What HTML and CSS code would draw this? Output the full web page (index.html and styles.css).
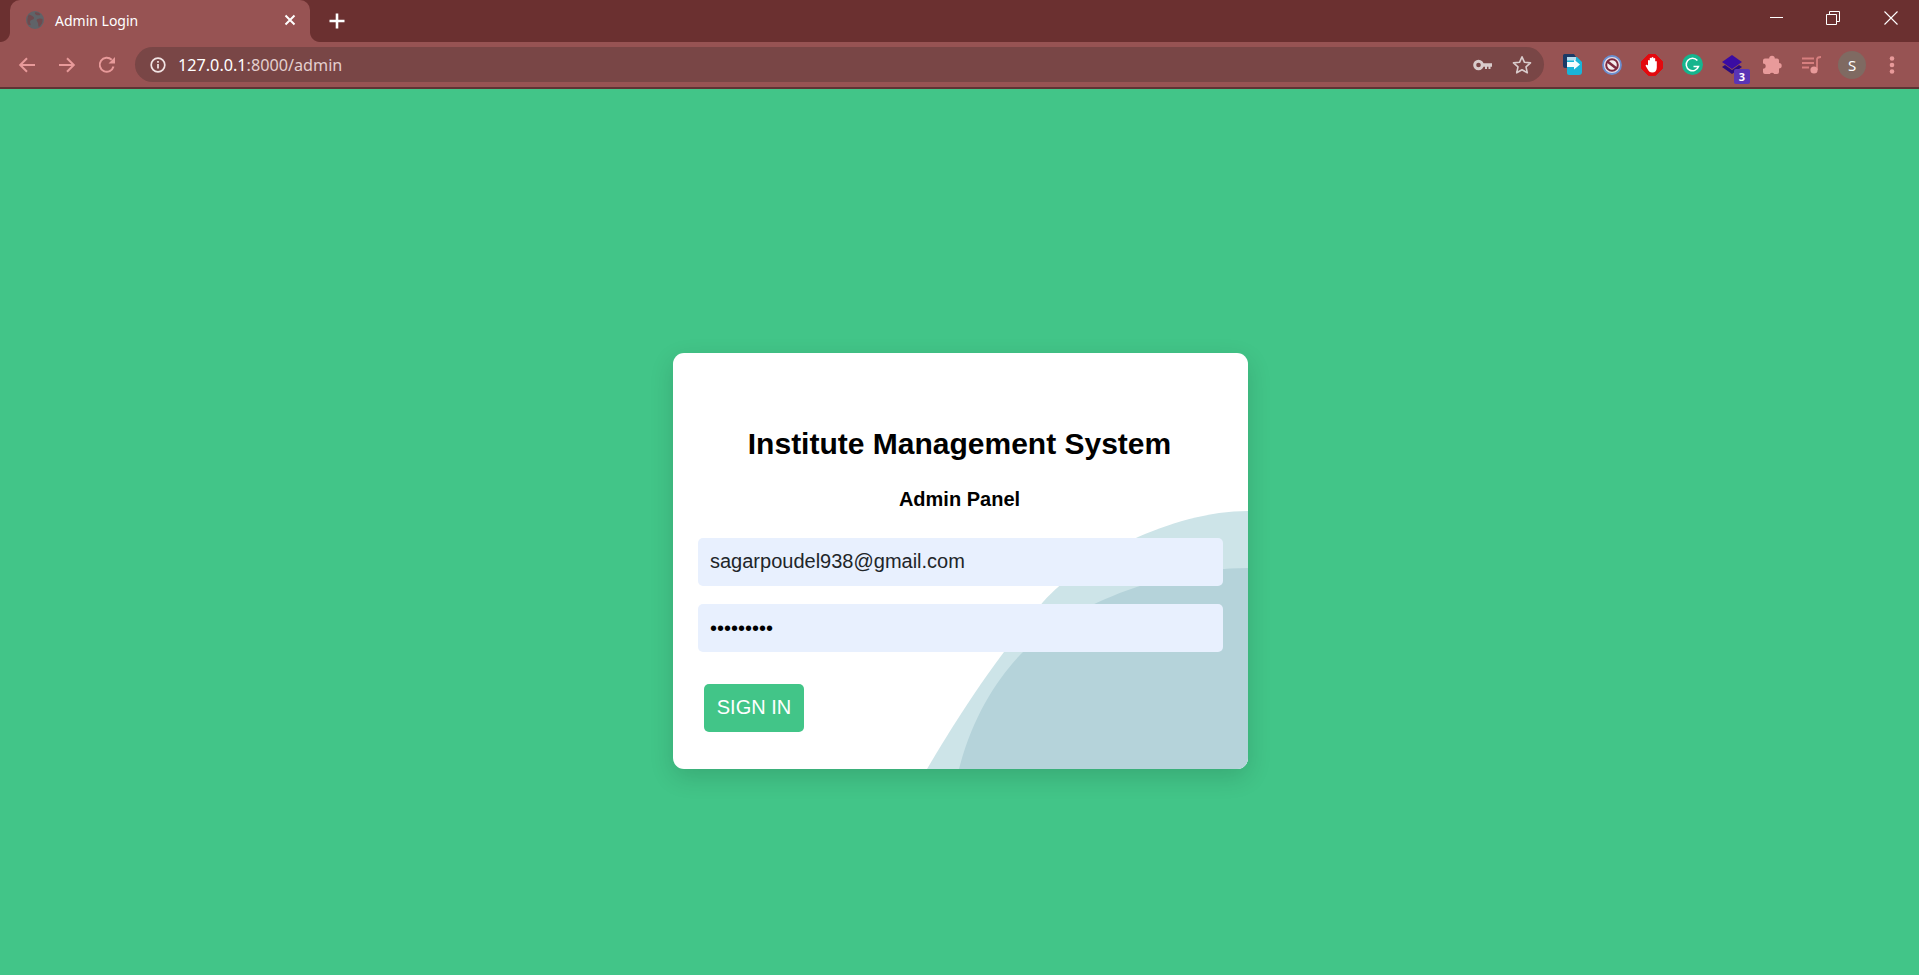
FILE: index.html
```html
<!DOCTYPE html>
<html lang="en">
<head>
<meta charset="utf-8">
<title>Admin Login</title>
<link rel="stylesheet" href="styles.css">
</head>
<body>
<div class="browser">
  <div class="tabstrip">
    <div class="tab">
      <svg class="favicon" width="18" height="18" viewBox="0 0 18 18"><circle cx="9" cy="9" r="9" fill="#5f6368"/><path d="M3 3.500c2 .5 3 1 4.500 2.500s-.5 2.500-2 3-2 2-1 4-2.500 1.500-3-1S1.500 5 3 3.500zM11 8.500c1.500-1 4-1.500 5.500-.5.5 3-1 6-3.500 8-1-.5-.5-2.500-1-4s-2-2.500-1-3.500zM9 1.500c2-.5 4 .5 5.500 2-1 1-3 1-4 .5S8.500 2.500 9 1.500z" fill="#6f4a4e"/></svg>
      <span class="tab-title">Admin Login</span>
      <svg class="tab-close" width="12" height="12" viewBox="0 0 12 12"><path d="M1.500 1.500l9 9M10.500 1.500l-9 9" stroke="#fff" stroke-width="2"/></svg>
    </div>
    <svg class="newtab" width="16" height="16" viewBox="0 0 16 16"><path d="M8 .5v15M.5 8h15" stroke="#fff" stroke-width="2.600"/></svg>
    <div class="winctl">
      <span class="winbtn"><svg width="14" height="14" viewBox="0 0 14 14"><path d="M0 6.500h13" stroke="#fff"/></svg></span>
      <span class="winbtn"><svg width="14" height="14" viewBox="0 0 14 14"><path d="M.5 3.500h10v10H.5zM3.500 3.500v-3h10v10h-3" fill="none" stroke="#fff"/></svg></span>
      <span class="winbtn"><svg width="14" height="14" viewBox="0 0 14 14"><path d="M.5.500l13 13M13.500.500l-13 13" stroke="#fff" stroke-width="1.100"/></svg></span>
    </div>
  </div>
  <div class="toolbar">
    <span class="iconbtn"><svg width="18" height="18" viewBox="0 0 18 18"><path d="M17 9H2M9 2.200L2.200 9 9 15.800" fill="none" stroke="#e89a9a" stroke-width="2"/></svg></span>
    <span class="iconbtn"><svg width="18" height="18" viewBox="0 0 18 18"><path d="M1 9h15M9 2.200L15.800 9 9 15.800" fill="none" stroke="#e89a9a" stroke-width="2"/></svg></span>
    <span class="iconbtn"><svg width="18" height="18" viewBox="0 0 18 18"><path d="M15.500 10.500A7 7 0 1 1 13.700 3.800" fill="none" stroke="#e89a9a" stroke-width="2"/><path d="M17 1v6.500h-6.500z" fill="#e89a9a"/></svg></span>
    <div class="omnibox">
      <svg class="info" width="16" height="16" viewBox="0 0 16 16"><circle cx="8" cy="8" r="6.800" fill="none" stroke="#f2e4e4" stroke-width="1.700"/><path d="M8 7v4.500M8 4v1.700" stroke="#f2e4e4" stroke-width="1.700"/></svg>
      <span class="url"><span class="host">127.0.0.1</span>:8000/admin</span>
      <svg class="key" width="19" height="12" viewBox="0 0 19 12"><circle cx="5.500" cy="6" r="3.800" fill="none" stroke="#d9cccc" stroke-width="3"/><path d="M9 4.300h10v3.400h-1.500V10h-2V7.700h-1.500V10h-2V7.700H9z" fill="#d9cccc"/></svg>
      <svg class="star" width="20" height="20" viewBox="0 0 20 20"><path d="M10 1.800l2.500 5.500 6 .6-4.500 4 1.300 5.900L10 14.700l-5.300 3.100L6 11.900l-4.500-4 6-.6z" fill="none" stroke="#d9cccc" stroke-width="1.600" stroke-linejoin="round"/></svg>
    </div>
    <div class="extensions">
      <span class="iconbtn"><svg class="ext-first" width="20" height="21" viewBox="0 0 20 21"><path d="M0 1.500A1.500 1.500 0 0 1 1.500 0H11l2 3H4v11H2a2 2 0 0 1-2-2z" fill="#1b3a66"/><path d="M4 3h10l5 5v10a3 3 0 0 1-3 3H6a2 2 0 0 1-2-2z" fill="#19b4d8"/><path d="M4 3h9v3.500H4z" fill="#b9dff0"/><path d="M4 8h7V5.500l6 5-6 5V13H4z" fill="#f4fbfd"/></svg></span>
      <span class="iconbtn"><svg width="20" height="20" viewBox="0 0 20 20"><circle cx="10" cy="10" r="9" fill="#e6dde6" stroke="#6a8fd0" stroke-width="1.800"/><circle cx="10" cy="10" r="5.800" fill="#f4eeee" stroke="#7d2a3e" stroke-width="2"/><path d="M5.500 6.500l9 7" stroke="#7d2a3e" stroke-width="2.600"/></svg></span>
      <span class="iconbtn"><svg width="22" height="22" viewBox="0 0 22 22"><path d="M7.500.500h7L21.500 7.500v7L14.500 21.500h-7L.500 14.500v-7z" fill="#e3090e" stroke="#e3090e" stroke-linejoin="round"/><path d="M7 11.500V6.500a1 1 0 0 1 1.800 0V4.200a1 1 0 0 1 1.800 0V3.500a1 1 0 0 1 1.800 0V4.500a1 1 0 0 1 1.800 0V7.500a.9.900 0 0 1 1.600 0V13.500c0 3-1.500 5-4.600 5-2.400 0-3.400-1-4.400-3L4.700 12c-.6-1.200 1.500-2 2.300-.5z" fill="#fff"/></svg></span>
      <span class="iconbtn"><svg width="21" height="21" viewBox="0 0 21 21"><circle cx="10.500" cy="10.500" r="10.500" fill="#15b58e"/><path d="M15.400 6.500a6.300 6.300 0 1 0 1.100 6H11.500M16.500 12.500l-1.800 2.600" fill="none" stroke="#fff" stroke-width="1.500"/></svg></span>
      <span class="iconbtn badge-host"><svg width="22" height="20" viewBox="0 0 22 20"><path d="M11 0l10 7-10 7L1 7z" fill="#3a0ca3"/><path d="M4 10l7 5 7-5 3 2-10 7-10-7z" fill="#2a0a80"/></svg><span class="badge">3</span></span>
      <span class="iconbtn"><svg width="20" height="20" viewBox="0 0 20 20"><path d="M7.200 3.500a2.800 2.800 0 0 1 5.600 0H15a2 2 0 0 1 2 2v2.500a2.700 2.700 0 0 1 0 5.400V17a2 2 0 0 1-2 2h-2.800a2.500 2.500 0 0 0-4.400 0H3a2 2 0 0 1-2-2v-3.200a2.700 2.700 0 0 0 0-5.400V5.500a2 2 0 0 1 2-2z" fill="#e89a9a"/></svg></span>
      <span class="iconbtn"><svg width="20" height="18" viewBox="0 0 20 18"><path d="M0 2.500h12M0 7h12M0 11.500h7" stroke="#d77f7f" stroke-width="1.800"/><path d="M15 14V3.500C15 1.800 16.500 1 19 1" fill="none" stroke="#d77f7f" stroke-width="1.800"/><circle cx="12" cy="14" r="3.600" fill="#e89a9a"/></svg></span>
      <span class="iconbtn"><span class="avatar">S</span></span>
      <span class="iconbtn"><svg width="6" height="18" viewBox="0 0 6 18"><circle cx="3" cy="2.500" r="2.300" fill="#e89a9a"/><circle cx="3" cy="9" r="2.300" fill="#e89a9a"/><circle cx="3" cy="15.500" r="2.300" fill="#e89a9a"/></svg></span>
    </div>
  </div>
  <main class="page">
    <form class="card">
      <svg class="waves" width="575" height="416" viewBox="1 0 575 416"><path d="M255 416C300 340 330 300 371 249 410 205 500 158 576 158V416z" fill="#cde4e8"/><path d="M287 416C300 365 325 325 351 299 385 262 480 215 576 215V416z" fill="#b5d3da"/></svg>
      <h1 class="title">Institute Management System</h1>
      <h2 class="subtitle">Admin Panel</h2>
      <input class="field" type="email" value="sagarpoudel938@gmail.com">
      <input class="field" type="password" value="password1">
      <button class="signin" type="button">SIGN IN</button>
    </form>
  </main>
</div>
</body>
</html>
```
FILE: styles.css
```css
* { box-sizing: border-box; }
html, body { margin: 0; height: 100%; overflow: hidden; }
body { font-family: "Liberation Sans", Arial, sans-serif; }
.browser { height: 975px; display: flex; flex-direction: column; }

.tabstrip { height: 42px; flex: none; display: flex; align-items: center; background: #6b3030; padding-left: 10px; }
.tab { position: relative; width: 300px; height: 42px; display: flex; align-items: center; padding: 0 14px 2px 16px; background: #975353; border-radius: 10px 10px 0 0; }
.tab::before, .tab::after { content: ""; position: absolute; bottom: 0; width: 10px; height: 10px; }
.tab::before { left: -10px; background: radial-gradient(circle at 0 0, #6b3030 9.500px, #975353 10.500px); }
.tab::after { right: -10px; background: radial-gradient(circle at 100% 0, #6b3030 9.500px, #975353 10.500px); }
.favicon { flex: none; margin-right: 11px; }
.tab-title { flex: 1; color: #fff; font: 14px "Noto Sans", sans-serif; }
.tab-close { flex: none; }
.newtab { flex: none; margin-left: 19px; }
.winctl { margin-left: auto; display: flex; align-self: flex-start; }
.winbtn { width: 56px; height: 36px; display: flex; align-items: center; justify-content: center; }
.winbtn:last-child { margin-left: 2px; }

.toolbar { height: 47px; flex: none; display: flex; align-items: center; padding: 0 7px; background: #975353; border-bottom: 2px solid #5e3434; }
.iconbtn { width: 40px; height: 36px; flex: none; display: flex; align-items: center; justify-content: center; }
.ext-first { margin-left: 1px; }
.omnibox { flex: 1; height: 35px; margin: 0 8px; display: flex; align-items: center; padding: 0 12px 0 15px; background: #794646; border-radius: 18px; }
.info { flex: none; margin-right: 12px; }
.url { flex: 1; font: 16.2px "Noto Sans", sans-serif; color: #e4cfcf; }
.host { color: #fff; }
.key { flex: none; margin-right: 20px; }
.star { flex: none; }
.extensions { display: flex; }
.badge-host { position: relative; }
.badge { position: absolute; left: 22px; top: 22px; width: 16px; height: 15px; border-radius: 2px; background: #5a35b5; color: #fff; font: bold 11px/15px "Noto Sans", sans-serif; text-align: center; }
.avatar { width: 28px; height: 28px; border-radius: 50%; background: #7f6a62; color: #fff; font: 15px/28px "Noto Sans", sans-serif; text-align: center; }

.page { flex: 1; display: flex; align-items: center; justify-content: center; padding: 58px 0 0 2px; background: #42c588; }
.card { position: relative; width: 575px; height: 416px; padding: 0 25px; background: #fff; border-radius: 11px; overflow: hidden; display: flex; flex-direction: column; align-items: center; box-shadow: 0 8px 24px rgba(0, 0, 0, .14); }
.waves { position: absolute; left: 0; top: 0; }
.title, .subtitle, .field, .signin { position: relative; }
.title { margin: 73px 0 0 -2px; font-size: 30px; line-height: 36px; font-weight: 700; color: #000; }
.subtitle { margin: 25px 0 0 -2px; font-size: 20px; line-height: 24px; font-weight: 700; color: #000; }
.field { width: 525px; height: 48px; flex: none; border: 0; outline: 0; border-radius: 5px; padding: 0 12px 2px; background: #e8f0fe; color: #212529; font: 20px "Liberation Sans", sans-serif; }
.field[type="password"] { padding-bottom: 0; }
.subtitle + .field { margin-top: 27px; }
.field + .field { margin-top: 18px; color: #000; }
.signin { align-self: flex-start; margin: 32px 0 0 6px; width: 100px; height: 48px; border: 0; padding: 0 0 2px; border-radius: 5px; background: #42c588; color: #fff; font: 20px "Liberation Sans", sans-serif; }
```
